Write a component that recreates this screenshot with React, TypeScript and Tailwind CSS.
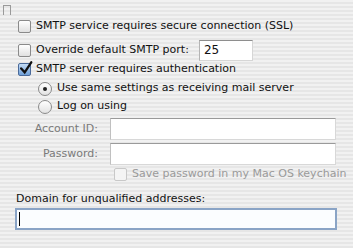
import React from "react";

function CheckBox({ checked, disabled }: { checked?: boolean; disabled?: boolean }) {
  return (
    <div
      className={
        "relative h-[13px] w-[13px] shrink-0 rounded-[2px] border " +
        (disabled
          ? "border-[#c8c8c8] bg-[#f4f4f4]"
          : checked
          ? "border-[#4a6a9a] bg-gradient-to-b from-[#c4dcf6] to-[#6fa0d8]"
          : "border-[#8a8a8a] bg-gradient-to-b from-[#ffffff] to-[#e0e0e0]")
      }
    >
      {checked && (
        <svg viewBox="0 0 16 16" className="absolute left-[0px] top-[-3px] h-[14px] w-[14px]">
          <path d="M2.5 8.5 L6.5 13 L14 1.5" stroke="#111" strokeWidth="2.6" fill="none" strokeLinecap="round" />
        </svg>
      )}
    </div>
  );
}

function Radio({ checked }: { checked?: boolean }) {
  return (
    <div className="flex h-[14px] w-[14px] shrink-0 items-center justify-center rounded-full border border-[#8a8a8a] bg-gradient-to-b from-[#ffffff] to-[#e2e2e2]">
      {checked && <div className="h-[4px] w-[4px] rounded-full bg-[#222]" />}
    </div>
  );
}

export default function App() {
  const stripes =
    "bg-[repeating-linear-gradient(to_bottom,#f1f1f1_0px,#f1f1f1_2px,#e6e6e6_2px,#e6e6e6_4px)]";
  return (
    <div
      className={"relative h-[248px] w-[353px] overflow-hidden whitespace-nowrap text-[11px] text-[#111] " + stripes}
      style={{ fontFamily: '"DejaVu Sans", "Liberation Sans", sans-serif' }}
    >
      <div className="absolute left-[3px] top-[5px] h-[10px] w-[8px] border-l border-r border-t border-[#9a9a9a]" />

      <div className="flex flex-col pl-[18px] pt-[19px]">
        <div className="flex h-[15px] items-center gap-[5px]">
          <CheckBox />
          <span>SMTP service requires secure connection (SSL)</span>
        </div>

        <div className="mt-[5px] flex h-[22px] items-center">
          <CheckBox />
          <span className="ml-[5px]">Override default SMTP port:</span>
          <div className="ml-[10px] flex h-[21px] w-[54px] items-center border border-t-[#8e8e8e] border-l-[#b4b4b4] border-r-[#d6d6d6] border-b-[#d6d6d6] bg-white pl-[4px] text-[12px]">
            25
          </div>
        </div>

        <div className="mt-[1px] flex h-[15px] items-center gap-[5px]">
          <CheckBox checked />
          <span>SMTP server requires authentication</span>
        </div>

        <div className="ml-[20px] mt-[4px] flex h-[15px] items-center gap-[5px]">
          <Radio checked />
          <span>Use same settings as receiving mail server</span>
        </div>

        <div className="ml-[20px] mt-[3px] flex h-[15px] items-center gap-[5px]">
          <Radio />
          <span>Log on using</span>
        </div>

        <div className="mt-[4px] flex h-[22px] items-center">
          <span className="w-[80px] text-right text-[#7a7a7a]">Account ID:</span>
          <div className="ml-[12px] h-[22px] w-[226px] border border-t-[#9a9a9a] border-l-[#c0c0c0] border-r-[#d8d8d8] border-b-[#d8d8d8] bg-white" />
        </div>

        <div className="mt-[3px] flex h-[22px] items-center">
          <span className="w-[80px] text-right text-[#7a7a7a]">Password:</span>
          <div className="ml-[12px] h-[22px] w-[226px] border border-t-[#9a9a9a] border-l-[#c0c0c0] border-r-[#d8d8d8] border-b-[#d8d8d8] bg-white" />
        </div>

        <div className="ml-[96px] mt-[2px] flex h-[14px] items-center gap-[5px] text-[#9a9a9a]">
          <CheckBox disabled />
          <span>Save password in my Mac OS keychain</span>
        </div>
      </div>

      <div className="flex flex-col pl-[16px] pt-[10px]">
        <span>Domain for unqualified addresses:</span>
        <div className="ml-[-1px] flex h-[22px] w-[322px] items-center border-2 border-[#8aa4c6] bg-[#fbfdff] pl-[2px]">
          <div className="h-[14px] w-[1px] bg-black" />
        </div>
      </div>
    </div>
  );
}
